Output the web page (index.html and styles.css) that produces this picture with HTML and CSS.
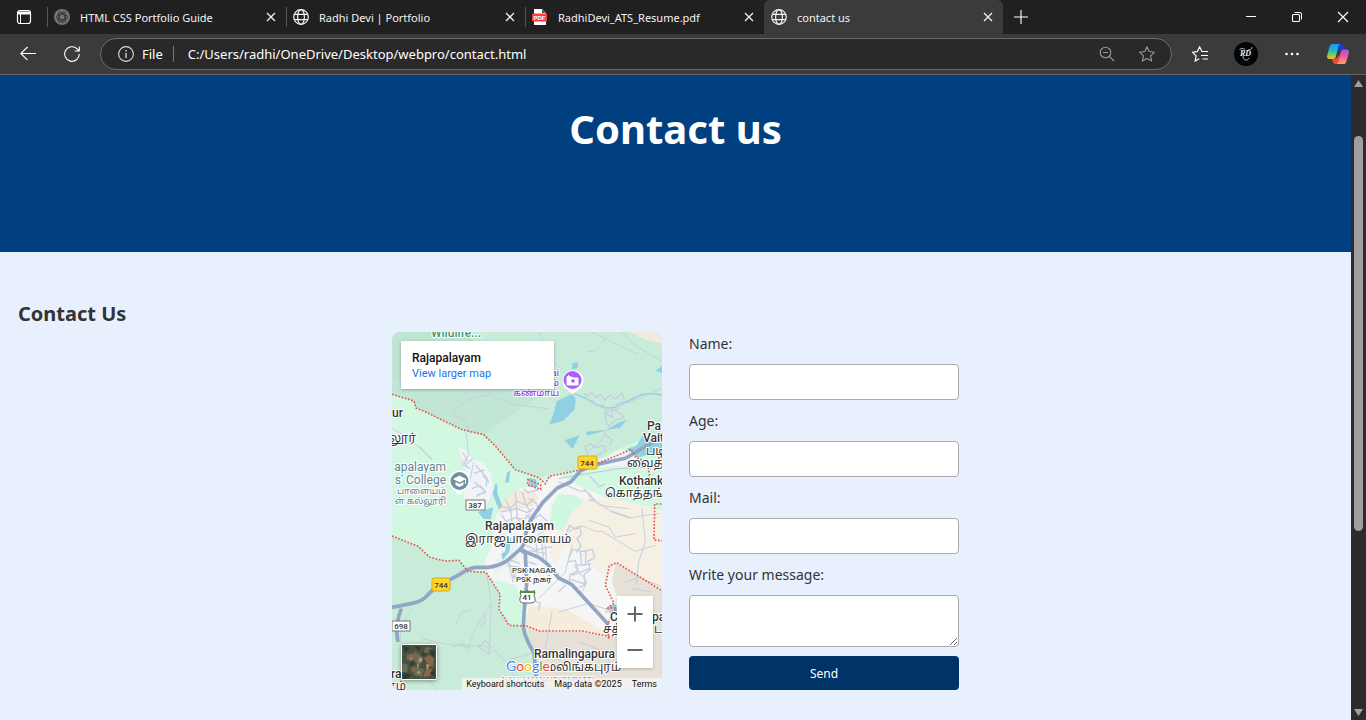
FILE: index.html
```html
<!DOCTYPE html>
<html lang="en">
<head>
<meta charset="utf-8">
<meta name="viewport" content="width=device-width, initial-scale=1">
<title>contact us</title>
<link rel="stylesheet" href="styles.css">
</head>
<body>
<svg class="defs" aria-hidden="true">
  <symbol id="globe" viewBox="0 0 16 16"><g fill="none" stroke="currentColor" stroke-width="1.2"><circle cx="8" cy="8" r="7.3"/><ellipse cx="8" cy="8" rx="3.4" ry="7.3"/><path d="M1.2 5.4h13.6M1.2 10.6h13.6"/></g></symbol>
  <symbol id="close" viewBox="0 0 16 16"><path d="M4 4l8 8M12 4l-8 8" fill="none" stroke="currentColor" stroke-width="1.3"/></symbol>
</svg>

<div class="browser">
  <header class="tabstrip">
    <button class="tab-actions" aria-label="Tab actions"><svg class="icon" viewBox="0 0 16 16"><rect x="1.5" y="1.5" width="13" height="13" rx="2.5" fill="none" stroke="#fff" stroke-width="1.2"/><path d="M1.5 2.5h13v3h-13z" fill="#fff"/><path d="M4.5 5v9.500" stroke="#fff"/></svg></button>
    <div class="tab">
      <svg class="icon" viewBox="0 0 16 16"><circle cx="8" cy="8" r="8" fill="#747474"/><g fill="none" stroke="#333" stroke-width=".9"><ellipse cx="8" cy="8" rx="5.600" ry="2.800"/><ellipse cx="8" cy="8" rx="5.600" ry="2.800" transform="rotate(60 8 8)"/><ellipse cx="8" cy="8" rx="5.600" ry="2.800" transform="rotate(120 8 8)"/></g></svg>
      <a class="tab-title" href="#guide">HTML CSS Portfolio Guide</a>
      <button class="tab-close" aria-label="Close tab"><svg class="icon"><use href="#close"/></svg></button>
    </div>
    <div class="tab">
      <svg class="icon"><use href="#globe"/></svg>
      <a class="tab-title" href="#portfolio">Radhi Devi | Portfolio</a>
      <button class="tab-close" aria-label="Close tab"><svg class="icon"><use href="#close"/></svg></button>
    </div>
    <div class="tab">
      <svg class="icon" viewBox="0 0 16 16"><path d="M2 0h8l4 4v12H2z" fill="#fff"/><path d="M10 0l4 4h-4z" fill="#555"/><rect x="0" y="4.500" width="15" height="8" rx="1" fill="#fb3f3f"/><text class="pdf-mark" x="7.500" y="10.800" text-anchor="middle">PDF</text></svg>
      <a class="tab-title" href="#resume">RadhiDevi_ATS_Resume.pdf</a>
      <button class="tab-close" aria-label="Close tab"><svg class="icon"><use href="#close"/></svg></button>
    </div>
    <div class="tab tab-active">
      <svg class="icon"><use href="#globe"/></svg>
      <a class="tab-title" href="#contact">contact us</a>
      <button class="tab-close" aria-label="Close tab"><svg class="icon"><use href="#close"/></svg></button>
    </div>
    <button class="new-tab" aria-label="New tab"><svg class="icon" viewBox="0 0 16 16"><path d="M8 1v14M1 8h14" stroke="#fff" stroke-width="1.1"/></svg></button>
    <div class="window-controls">
      <button aria-label="Minimize"><svg class="icon" viewBox="0 0 16 16"><path d="M3 7.500h10" stroke="#fff"/></svg></button>
      <button aria-label="Restore"><svg class="icon" viewBox="0 0 16 16"><rect x="3.500" y="5.500" width="7" height="7" rx="1" fill="none" stroke="#fff" stroke-width="1.100"/><path d="M5.500 3.500h5.500a1.500 1.500 0 0 1 1.500 1.500v5.500" fill="none" stroke="#fff"/></svg></button>
      <button aria-label="Close"><svg class="icon" viewBox="0 0 16 16"><path d="M3 3l10 10M13 3L3 13" stroke="#fff" stroke-width="1.200"/></svg></button>
    </div>
  </header>

  <nav class="toolbar" aria-label="Browser toolbar">
    <button class="nav-button" aria-label="Back"><svg class="icon" viewBox="0 0 16 16"><path d="M16 7.500H.8M7.500 1L.8 7.500l6.700 6.700" fill="none" stroke="#fff" stroke-width="1.100"/></svg></button>
    <button class="nav-button" aria-label="Refresh"><svg class="icon" viewBox="0 0 16 16"><path d="M15.300 8A7.300 7.300 0 1 1 12.900 2.600L15.300 5M15.300.5V5H10.800" fill="none" stroke="#fff" stroke-width="1.100"/></svg></button>
    <div class="address">
      <svg class="icon" viewBox="0 0 16 16"><circle cx="8" cy="8" r="7.400" fill="none" stroke="#ddd" stroke-width="1.100"/><path d="M8 7v5M8 4v1.500" stroke="#ddd" stroke-width="1.300"/></svg>
      <label class="scheme" for="url">File</label>
      <input class="url" id="url" type="text" value="C:/Users/radhi/OneDrive/Desktop/webpro/contact.html">
      <button aria-label="Zoom out"><svg class="icon" viewBox="0 0 16 16"><g fill="none" stroke="#999" stroke-width="1.100"><circle cx="6.500" cy="6.500" r="5.300"/><path d="M10.500 10.500l4.500 4.500M4 6.500h5"/></g></svg></button>
      <button aria-label="Add to favorites"><svg class="icon" viewBox="0 0 16 16"><path d="M8 .8l2.200 4.700 5.200.7-3.800 3.600 1 5.200L8 12.500 3.400 15l1-5.200L.6 6.200l5.200-.7z" fill="none" stroke="#999" stroke-width="1.100" stroke-linejoin="round"/></svg></button>
    </div>
    <div class="tools">
      <button aria-label="Favorites"><svg class="icon" viewBox="0 0 16 16"><path d="M10 5.500L7.600.8 5.400 5.500.6 6.300l3.500 3.600-.9 5.100 4-2.300M9.500 5.500H16M9 9.500h7M10.500 13H16" fill="none" stroke="#fff" stroke-width="1.200"/></svg></button>
      <button aria-label="Profile"><svg class="icon icon-large" viewBox="0 0 24 24"><circle cx="12" cy="12" r="12" fill="#030405"/><text class="monogram" x="11.500" y="14" text-anchor="middle">RD</text><path d="M5.500 8c1-2 4-2 6 0M14 8c2 0 4-1 4-3M9 14c0 5 5 5 6 2" fill="none" stroke="#ddd" stroke-width=".8"/></svg></button>
      <button aria-label="More"><svg class="icon" viewBox="0 0 16 16" fill="#fff"><circle cx="2.500" cy="8" r="1.300"/><circle cx="8" cy="8" r="1.300"/><circle cx="13.500" cy="8" r="1.300"/></svg></button>
      <button aria-label="Copilot"><svg class="icon icon-large" viewBox="0 0 24 24">
        <defs>
          <linearGradient id="cool" x1="0" y1="0" x2="0" y2="1"><stop offset="0" stop-color="#1997ee"/><stop offset=".45" stop-color="#25b8c5"/><stop offset=".75" stop-color="#92c83f"/><stop offset="1" stop-color="#f6c51d"/></linearGradient>
          <linearGradient id="warm" x1="0" y1="0" x2="0" y2="1"><stop offset="0" stop-color="#a64ee6"/><stop offset=".5" stop-color="#ee5f99"/><stop offset="1" stop-color="#fda15a"/></linearGradient>
        </defs>
        <path d="M11 2h4c2 0 2.500 1 3 3l.9 3H14l-3 4z" fill="#173fc6"/>
        <path d="M6 16.500h4.500l3-4V19c-.4 2-1.500 3-3 3H9.500c-1.700 0-2.400-1-2.800-2.800z" fill="#ed4b35"/>
        <path d="M6 2h8.500c-1.400.3-1.900 1.500-2.200 2.500L10 14c-.6 2.200-1.500 3-3.200 3H3.500C1.300 17 .7 15.500 1.200 13.500L3.500 5C4 3 4.600 2 6 2z" fill="url(#cool)"/>
        <path d="M18 22h-8c1.500-.3 2.200-1.500 2.500-2.600L14.500 11c.6-2.300 1.300-3.500 3-3.500h3c2.200 0 2.900 1.300 2.400 3.300L20.500 19c-.5 2-1.200 3-2.500 3z" fill="url(#warm)"/>
      </svg></button>
    </div>
  </nav>

  <div class="viewport">
    <main class="page">
      <div class="banner"><h1>Contact us</h1></div>
      <section class="contact" id="contact">
        <h2>Contact Us</h2>
        <div class="columns">
          <div class="map">
            <svg class="map-canvas" viewBox="0 0 270 358" preserveAspectRatio="xMidYMid slice" role="img" aria-label="Map of Rajapalayam">
              <svg width="270" height="358" viewBox="0 0 810 1074">
                <rect width="810" height="1074" fill="#d3f8e2"/>
                <path d="M0 0H810V300L690 346 560 412 440 437 370 413 310 342 275 308 207 292 108 243 72 228 66 207 0 187z" fill="#c9ebda"/>
                <path d="M0 0H215C290 70 380 95 470 175L380 235 275 308 207 292 108 243 72 228 66 207 0 187z" fill="#bfe4d1"/>
                <path d="M0 148H30L470 172 380 235 275 308 207 292 108 243 72 228 66 207 0 187z" fill="#c2e6d5"/>
                <path d="M0 612l78 31 36 33 45 11 42-2 27 33 54 3 42 66-3 45 30 48 45 3 25 40 10 151H0z" fill="#c9ebda"/>
                <path d="M715 0h95v35l-50-12z" fill="#f0eadf"/>
                <path d="M200 350q10-10 22 10l28 28 24 2 22 34 8 44-12 36-30 30-40-12-8-44 6-60z" fill="#f1f3f7"/>
                <path d="M385 470l60-15 50-30 60 30 90 45 165 10v390l-130 20-100-2-160-38-24-50-24-70-80-20-14-50 24-60 10-80z" fill="#f5f5f6"/>
                <path d="M375 475l48 2 16 18-10 24-70 22-52-8z" fill="#f4eadb"/>
                <path d="M330 600l40 20 10 60-70 50-10-24 26-40z" fill="#e9f3f1"/>
                <path d="M560 500l250 0v280L674 694 644 740 560 660 520 640 490 700 470 660 500 590z" fill="#f5efe4"/>
                <path d="M412 820l110 12 118 68 20 14-220-16-40-12z" fill="#f4ecdd"/>
                <path d="M480 520l20-35 50 5 24 18-30 30-24 40-10 20-40-12z" fill="#cff8e1"/>
                <path d="M535 445l110-50 45-44 120 80v104l-170-42-70-28z" fill="#d3f8e2"/>
                <path d="M625 385l65-34 52 24 30 30-90-4-60 6z" fill="#f1f3f7"/>
                <path d="M500 440l80-14 100-16 130-6" fill="none" stroke="#bac8d6" stroke-width="3"/>
                <path d="M674 694l136 80v300H430l-4-120-22-72 38 15 127 4 101 20 20-85-30-86 6-36z" fill="#e7e0d7"/>
                <path d="M396 870l30 84-4 120h-30l-20-60z" fill="#cbeedb"/>
                <g fill="#8fd0e2">
                  <path d="M540 186l-46 22-8 32-14 38 42-12 34-34 3-32z"/><path d="M541 94l17-4-1 18-17 4z"/><path d="M518 325l44-15-20 41z"/><path d="M586 311l-5-12 62-5 36-22 25-8-20 24-30 4z"/><path d="M790 116l20-14v22z"/><path d="M704 350l28-8 20-30 58 0v56l-50 2-22 8z"/><path d="M345 422l10-6-4 34-12 3z"/><path d="M310 456l6 2 0 26 16 40-12 8-18-46z"/><path d="M258 540l46-14-8 36-22-2z"/><path d="M412 438l20 4 6 24-28-2z"/><path d="M645 825l26-8 8 24-24 6z"/><path d="M340 630l18-14-6 44-20 24-4-18 12-8zM362 728l12 4-6 8z"/>
                </g>
                <path d="M545 185c50 10 75 58 130 38s62-48 135-34" fill="none" stroke="#8fd0e2" stroke-width="4"/>
                <g class="street">
                  <path d="M440 0c50 90 40 95 70 110M600 0l90 45 48 22M640 20l-30 38-22 0M690 0c40 50 80 60 120 90M810 168l-56 26-80 30M180 248c30-40 60-55 116-60l60 28 110 14M290 190l-5-45M183 250l40 18 10 34"/>
                  <path d="M0 290c50 20 80 60 120 90M660 270l-36 60-34 28M120 385l-40-45M222 300l8 70-20 24M245 390l-12 60M60 830c-40 60-50 90-10 140l90 110M284 725l14 90-44 70-30 70M190 880l20-40 28-6M298 820l-6 120 60 60 30 74M90 920l90 20 100 0 20 24M265 880l14-8-2-30M405 450l35 28M470 590l-34 20"/>
                  <path d="M600 500l60 40 50 18 90-14M590 565l60 20 20 30 60-10M530 600c50-40 60 5 100-2l100 60 60-18M750 530l10 100-20 60-8 70M720 558l-60-20M540 640l-20 80-80 80M545 700l40 50-20 40M700 750l40-14 70 28M720 770l60 10M500 840l90-26 60 20M480 840l-20 110 60 50M560 930l70 26 40 60M430 960l-80 24M590 490l30 30 90 10"/>
                </g>
                <g class="street dense">
                  <path d="M578 185l14 6 8-10 12 16 16-10 10 18 16-16 18 12 18-18 8 26-26 8 10 12-22 6 2 22-16-10-12-28-22 2-10-16-16 0zM640 240l22-8 28 16 6 10-26 6-20 20-8-16z"/>
                  <path d="M580 345l16-10 14 12 24-6 8 14-24 14-28 8zM640 310l22 14-10 16M592 430l30 34 18-8M500 450l60 26 24 2 16 16M575 470l34 36-20-2"/>
                  <path d="M212 362l14 20-12 16 20 12M220 400l22-20M250 400l20 20 16 20-4 24M246 424l30-10M240 470l24-10 16 18-28 16M248 450l26 24M272 430l20 22M255 488l26-6"/>
                  <path d="M315 520l40 10 20-22 30 12 20-20M325 540l50-10 30 12 20-14M328 548l14 20 26-10 30 4 18-18M340 500l16 36 4 36M370 480l6 80 18 20M390 480l14 44 14 16M400 550l24 12 20-14 22 20M410 500l20 10 14 26M422 558l-4 34 24 4M395 600l20-14 36 10M410 620l60 4M404 640l26 14 50-10M412 655l48 10M430 620l8 60M450 630l4 60M460 640l4 58M395 470l14 12 26-8"/>
                  <path d="M525 600l8-20 16 12 14-6 6 20-14 14 12 22-14 20M530 680l12-28 30 6 30-6 6 26-22 10 10 24-20 16 4 30-18 8M526 690l24-4 8 30-24 12-4 30M548 700l50-4M540 730l52-20M534 742l46 14M500 780l20-20M565 660l4 36M582 655l-2 46"/>
                  <path d="M340 680l44 14M345 700l46 8M350 690l14 60M380 710l-20 30M410 690l24 8M415 800l30 14-6 20M640 840l30-10M185 944l26-10 6 12 20-2M262 945l18-20 14 16-4 26z"/>
                </g>
                <path class="highway" d="M0 826l60-12q24-4 40-18l30-30 72-38q28-20 48-22h40q30-4 56-20l36-32q18-14 18-44 8-38 24-58l28-40 44-44 40-18 30-34 46-18 90-20 54-32 36-20 24-12h24M383 652l17 12 4 90-8 90-2 42q6 36 32 76l10 112M388 654l52 22 26 20 34 42 40 20 110 120M28 830q-20 50-10 100"/>
                <path class="border" d="M0 187l66 20 6 21 36 15 99 49 68 16 35 34 60 71 70 24 20 18 12-22 100-21 100-40 45-20 16 26 34 12 8 60M408 440l-2 18 40 14 0-14-36-14M0 612l78 31 36 33 45 11 42-2 27 33 54 3 42 66-3 45 30 48 53 2 38 15h127l101 20M650 920l-4-44 26-48-24 0 18-14-26-54 12-58 22-10 136 84M808 516l-20 0-2 108 24 2"/>
              </svg>
              <g class="badge">
                <rect x="186" y="124" width="19" height="13" rx="2" fill="#ffd42c" stroke="#dba91b"/><text x="195" y="134">744</text>
                <rect x="40" y="246" width="18" height="13" rx="2" fill="#ffd42c" stroke="#dba91b"/><text x="49" y="256">744</text>
                <rect x="74" y="168" width="19" height="10" fill="#fff" stroke="#777"/><text x="83" y="176">387</text>
                <rect x="0" y="289" width="18" height="10" fill="#fff" stroke="#777"/><text x="9" y="297">698</text>
                <path d="M128 260h15q-2 4 0 6 1 5-4 5h-7q-5 0-4-5 2-2 0-6z" fill="#fff" stroke="#666"/><path d="M128 258q4 2 7 0 4 2 8 0v3h-15z" fill="#568f45"/><text x="135" y="268">41</text>
              </g>
              <g class="places">
                <text class="park" x="39" y="5">Wildlife...</text>
                <text class="sight" x="167" y="44" text-anchor="end">ai</text><text class="sight" x="167" y="54" text-anchor="end">ம்</text><text class="sight" x="167" y="64" text-anchor="end">கண்மாய்</text>
                <text class="town" x="0" y="85">ur</text><text class="town tamil" x="-3" y="110">லூர்</text>
                <text class="school" x="54" y="139" text-anchor="end">apalayam</text><text class="school" x="54" y="152" text-anchor="end">s' College</text><text class="school tamil-small" x="54" y="162" text-anchor="end">பாளையம்</text><text class="school tamil-small" x="54" y="172" text-anchor="end">ள் கல்லூரி</text>
                <text class="town" x="255" y="98">Pa</text><text class="town" x="251" y="110">Vait</text><text class="town tamil" x="254" y="123">படி</text><text class="town tamil" x="235" y="135">வைத்</text>
                <text class="town" x="227" y="153">Kothank</text><text class="town tamil" x="213" y="165">கொத்தங்</text>
                <text class="town" x="93" y="198">Rajapalayam</text><text class="town tamil" x="73" y="211">இராஜபாளையம்</text>
                <text class="suburb" x="120" y="241">PSK NAGAR</text><text class="suburb" x="124" y="250">PSK நகர்</text>
                <text class="town" x="218" y="289">C</text><text class="town" x="260" y="289">pa</text><text class="town tamil" x="211" y="301">சத்</text><text class="town tamil" x="262" y="301">ட</text>
                <text class="town" x="142" y="326">Ramalingapura</text><text class="town tamil" x="154" y="339">மலிங்கபுரம்</text>
                <text class="town" x="-1" y="346">ra</text><text class="town tamil" x="-4" y="358">ரம்</text>
                <text class="hamlet" x="110" y="350">NALLAMANAICKENPATTI</text>
              </g>
              <path d="M180.500 62l-6-5a10.500 10.500 0 1 1 13 0z" fill="#fff"/><circle cx="180.500" cy="48" r="9" fill="#a960fa"/><path d="M175 45h5l1 1h5v7h-11zM176.500 43v3M175 44.500h3" fill="#fff" stroke="#fff"/><circle cx="181" cy="49" r="1.800" fill="#a855f7"/>
              <path d="M67 163l-7-7a10.500 10.500 0 1 1 15 0z" fill="#fff"/><circle cx="67.500" cy="149" r="9" fill="#71909d"/><path d="M61 147l6.500-3.500 6.500 3.500-6.500 3.500zM63.500 150v3l4 2 4-2v-3l-4 2zM73 147h1v5h-1z" fill="#fff"/>
              <text class="logo" x="114" y="339"><tspan fill="#4285f4">G</tspan><tspan fill="#ea4335">o</tspan><tspan fill="#fbbc05">o</tspan><tspan fill="#4285f4">g</tspan><tspan fill="#34a853">l</tspan><tspan fill="#ea4335">e</tspan></text>
            </svg>
            <div class="place-card"><strong>Rajapalayam</strong><a href="#map">View larger map</a></div>
            <button class="satellite" aria-label="Show satellite imagery"><svg viewBox="0 0 34 34"><rect width="34" height="34" fill="#46523e"/><g fill="#87644d"><path d="M5 10l6-2 2 4-3 4-5-1zM22 13l6-3 4 4-1 8-5-2zM24 23l6 1-2 7-7 1zM9 23l4-2 1 5-4 2z"/></g><g fill="#6d6b52"><path d="M12 5l8 7-2 9-6-5zM13 22l9 2-2 8-8-2zM1 18l5 2-1 7H0zM24 2l6 1-2 4-7 1z"/></g><g fill="#a99379"><path d="M18 12l3 2-2 4-3-2zM8 12l3 1-2 2zM24 19l4 1-3 5zM16 25l3 3-4 1zM15 17l2 4-2 3z"/></g><g fill="#2c3d2f"><path d="M1 1l7 2-5 5zM27 4l6 2v6l-4-2zM2 28l8 2-5 4H0zM28 28l5-4v8zM10 16l3 3-5 2zM12 1l7 1-2 4zM21 6l3 4-4 1z"/></g></svg></button>
            <div class="zoom">
              <button aria-label="Zoom in"><svg class="icon" viewBox="0 0 16 16"><path d="M8 .5v15M.5 8h15" stroke="#666" stroke-width="2"/></svg></button>
              <button aria-label="Zoom out of map"><svg class="icon" viewBox="0 0 16 16"><path d="M.5 8h15" stroke="#666" stroke-width="2"/></svg></button>
            </div>
            <div class="attribution"><button>Keyboard shortcuts</button><span>Map data ©2025</span><a href="#terms">Terms</a></div>
          </div>

          <form class="form">
            <label for="name">Name:</label>
            <input id="name" type="text">
            <label for="age">Age:</label>
            <input id="age" type="text">
            <label for="mail">Mail:</label>
            <input id="mail" type="email">
            <label for="message">Write your message:</label>
            <textarea id="message"></textarea>
            <button type="button">Send</button>
          </form>
        </div>
      </section>
    </main>
    <div class="scrollbar" aria-hidden="true">
      <svg class="arrow" viewBox="0 0 9 7"><path d="M4.500 0L9 7H0z"/></svg>
      <div class="track"><div class="thumb"></div></div>
      <svg class="arrow" viewBox="0 0 9 7"><path d="M4.500 7L9 0H0z"/></svg>
    </div>
  </div>
</div>
</body>
</html>
```
FILE: styles.css
```css
* { box-sizing: border-box; }
body {
  margin: 0;
  background: #e8f0fe;
  color: #333;
  font-family: "Noto Sans", "Open Sans", sans-serif;
}
button, input, textarea { font: inherit; color: inherit; }
button { display: flex; align-items: center; justify-content: center; padding: 0; border: 0; background: none; }
a { color: inherit; text-decoration: none; }
.defs { position: absolute; width: 0; height: 0; }
.icon { display: block; flex: none; width: 16px; height: 16px; }
.icon-large { width: 24px; height: 24px; }

.browser { display: flex; flex-direction: column; height: 100vh; }

/* Tab strip */
.tabstrip { display: flex; flex: none; height: 34px; background: #202020; color: #f2f2f2; font-size: 11px; font-family: "Noto Sans", "Open Sans", sans-serif; }
.tab-actions { width: 47px; }
.tab {
  display: flex;
  align-items: center;
  flex: 0 1 239px;
  min-width: 0;
  padding: 0 7px;
  background: linear-gradient(#555, #555) left center / 1px 20px no-repeat;
}
.tab-title { flex: 1; min-width: 0; margin-left: 10px; overflow: hidden; white-space: nowrap; }
.tab-active { background: #3b3b3b; border-radius: 6px 6px 0 0; }
.tab-close { width: 16px; height: 16px; }
.new-tab { width: 36px; }
.window-controls { display: flex; margin-left: auto; }
.window-controls button { width: 46px; }

.pdf-mark { fill: #fff; font: bold 6px "Liberation Sans", sans-serif; }
.monogram { fill: #eee; font: italic bold 8px "Liberation Serif", serif; }

/* Toolbar */
.toolbar { display: flex; align-items: center; flex: none; height: 41px; padding: 0 5px 0 6px; border-bottom: 1px solid #666; background: #3b3b3b; color: #fff; font-size: 13px; font-family: "Noto Sans", "Open Sans", sans-serif; }
.nav-button { width: 44px; height: 32px; }
.address { display: flex; align-items: center; flex: 1; min-width: 0; height: 32px; margin-left: 6px; padding: 0 4px 0 17px; border: 1px solid #6b6b6b; border-radius: 16px; background: #292929; }
.scheme { margin-left: 8px; padding-right: 10px; border-right: 1px solid #777; line-height: 16px; }
.url { flex: 1; min-width: 0; margin-left: 14px; padding: 0; border: 0; background: none; outline: 0; }
.address button { width: 40px; height: 28px; }
.tools { display: flex; margin-left: 5px; }
.tools button { width: 46px; height: 32px; }

/* Scrolled page */
.viewport { display: flex; flex: 1; min-height: 0; }
.page { flex: 1; min-width: 0; overflow: hidden; }
.banner { height: 177px; padding-top: 24px; background: #004080; color: #fff; text-align: center; }
h1 { margin: 0; font-size: 40px; line-height: 60px; }
.contact { padding: 48px 18px 30px; }
h2 { margin: 0; padding-bottom: 4px; font-size: 20px; line-height: 28px; }
.columns { display: flex; justify-content: center; gap: 27px; }

/* Map */
.map { position: relative; width: 270px; overflow: hidden; border-radius: 8px; font-family: Roboto, sans-serif; }
.map-canvas { position: absolute; inset: 0; width: 100%; height: 100%; }
.street { fill: none; stroke: #c3d1db; stroke-width: 3; stroke-linejoin: round; }
.dense { stroke: #c5cfde; stroke-width: 4; }
.highway { fill: none; stroke: #92a5c4; stroke-width: 11; stroke-linejoin: round; }
.border { fill: none; stroke: #e2574c; stroke-width: 5; stroke-dasharray: 5 5; }
.badge { fill: #333; font: 500 8px Roboto, sans-serif; text-anchor: middle; }
.places { font-family: Roboto, "Noto Sans Tamil", "Noto Sans", sans-serif; stroke: #fff; stroke-width: 2px; stroke-linejoin: round; }
.places text { paint-order: stroke; }
.town { fill: #333; font-size: 12px; font-weight: 500; }
.tamil { font-size: 12px; font-weight: 400; }
.suburb { fill: #444; font-size: 8px; font-weight: 500; }
.hamlet { fill: #777; font-size: 8px; }
.school { fill: #648290; font-size: 12px; }
.school.tamil-small { font-size: 9px; }
.park { fill: #3c9472; font-size: 12px; font-weight: 500; }
.sight { fill: #9143e8; font-size: 9px; font-weight: 500; }
.logo { font: 14px Lato, sans-serif; paint-order: stroke; stroke: #fff; stroke-width: 2px; }
.place-card { position: absolute; top: 9px; left: 9px; width: 153px; padding: 9px 11px 8px; background: #fff; box-shadow: 0 1px 3px #0004; font-size: 11px; line-height: 15px; }
.place-card strong { display: block; color: #111; font-size: 12px; font-weight: 500; line-height: 16px; }
.place-card a { display: block; color: #1a73e8; }
.satellite { position: absolute; bottom: 10px; left: 9px; width: 36px; height: 36px; border: 1px solid #fff; border-radius: 2px; box-shadow: 0 1px 4px #0006; }
.satellite svg { width: 34px; height: 34px; }
.zoom { position: absolute; right: 9px; bottom: 22px; width: 36px; background: #fff; box-shadow: 0 1px 3px #0003; }
.zoom button { width: 36px; height: 36px; }
.attribution { position: absolute; right: 0; bottom: 0; display: flex; gap: 10px; padding: 0 5px 0 4px; background: #f5f5f5cc; color: #111; font-size: 9px; line-height: 12px; white-space: nowrap; }

/* Form */
.form { display: flex; flex-direction: column; width: 270px; font-size: 14px; }
.form label { margin-bottom: 8px; line-height: 24px; }
.form input, .form textarea { width: 100%; height: 36px; margin: 0 0 9px; padding: 8px; border: 1px solid #aaa; border-radius: 4px; background: #fff; outline: 0; }
.form textarea { height: 52px; resize: vertical; }
.form button { height: 34px; border-radius: 4px; background: #003366; color: #fff; font-size: 12px; }

/* Scroll bar */
.scrollbar { display: flex; flex-direction: column; align-items: center; flex: none; width: 15px; padding: 5px 0 4px; background: #2c2c2c; }
.arrow { width: 9px; height: 7px; fill: #9f9f9f; }
.track { display: flex; flex-direction: column; flex: 1; padding: 49px 0 178px; }
.thumb { flex: 1; width: 9px; border-radius: 5px; background: #9f9f9f; }
```
